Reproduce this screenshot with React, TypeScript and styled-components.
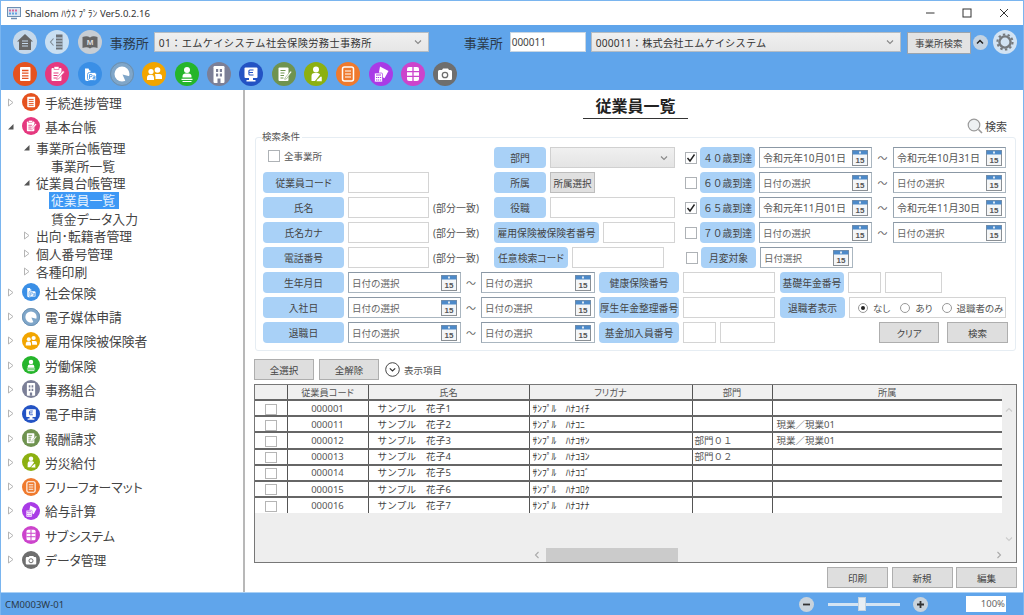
import React from "react";
import styled, { createGlobalStyle } from "styled-components";

const Global = createGlobalStyle`
  html, body { margin: 0; padding: 0; width: 1024px; height: 615px; overflow: hidden; background: #fff; }
  * { box-sizing: border-box; }
  body { font-family: "Noto Sans", "Noto Sans CJK JP", sans-serif; color: #444; }
`;

const Win = styled.div`
  width: 1024px; height: 615px; display: flex; flex-direction: column;
  border: 1px solid #7ab5ef; border-bottom: 0; background: #fff; overflow: hidden;
`;
const TitleBar = styled.div`
  height: 24px; flex: none; display: flex; align-items: center; padding-left: 6px; background: #fff;
`;
const TitleText = styled.span`
  margin-left: 4px; font-size: 9.6px; color: #333; white-space: nowrap; flex: 1;
`;
const WinControls = styled.div`
  display: flex; align-items: center; margin-right: 1px;
`;
const WinBtn = styled.div`
  width: 37px; height: 24px; display: flex; align-items: center; justify-content: center;
`;
const Toolbar = styled.div`
  height: 65px; flex: none; background: #60a5eb; padding: 5px 0 0 12px;
  display: flex; flex-direction: column; gap: 8px;
`;
const ToolRow = styled.div`
  height: 24px; display: flex; align-items: center;
`;
const IconRow = styled.div`
  height: 24px; display: flex; align-items: center; gap: 8.33px;
`;
const ToolLabel = styled.span<{ $ml: number }>`
  margin-left: ${(p) => p.$ml}px; font-size: 13px; color: #2b3a4a; white-space: nowrap; width: 40px;
`;
const ToolSelect = styled.div<{ $w: number; $ml: number; $ls: number }>`
  width: ${(p) => p.$w}px; margin-left: ${(p) => p.$ml}px; height: 20px; flex: none;
  display: flex; align-items: center; justify-content: space-between; padding: 0 6px 0 4px;
  background: linear-gradient(#f0f0f0, #e6e6e6); border: 1px solid #b4bcc4;
  font-size: 10.2px; letter-spacing: ${(p) => p.$ls}px; color: #333; white-space: nowrap;
`;
const ToolInput = styled.div<{ $w: number; $ml: number }>`
  width: ${(p) => p.$w}px; margin-left: ${(p) => p.$ml}px; height: 20px; flex: none;
  background: #fff; border: 1px solid #c9d6e2; padding-left: 1px; font-size: 10px; line-height: 18px; color: #444;
`;
const ToolBtn = styled.div`
  width: 64px; height: 22px; margin-left: 6px; margin-top: 2px; flex: none; background: #e3e3e3; border: 1px solid #9aa4ae;
  font-size: 9.5px; color: #444; display: flex; align-items: center; justify-content: center;
`;
const Collapse = styled.div`
  width: 15px; height: 15px; margin-left: 2px; border-radius: 50%; background: #c3d3e2;
  display: flex; align-items: center; justify-content: center; flex: none;
`;
const GearWrap = styled.div`
  margin-left: 5px; flex: none; display: flex;
`;
const Body = styled.div`
  flex: 1; min-height: 0; display: flex;
`;
const Sidebar = styled.nav`
  width: 242px; flex: none; background: #fff; font-feature-settings: "palt";
`;
const Splitter = styled.div`
  width: 2px; flex: none; background: #b8b8b8;
`;
const NavTop = styled.div`
  height: 24.3px; display: flex; align-items: center; padding-left: 6px; font-size: 12.8px; color: #444; white-space: nowrap;
`;
const NavSub = styled.div<{ $indent: number }>`
  height: 17.7px; display: flex; align-items: center; padding-left: ${(p) => p.$indent}px; font-size: 12.8px; color: #444; white-space: nowrap;
`;
const Arrow = styled.span<{ $w: number }>`
  width: ${(p) => p.$w}px; flex: none; display: flex; align-items: center;
`;
const NavIconBox = styled.span`
  width: 18px; height: 18px; margin: 0 5px 0 5px; flex: none; display: flex;
`;
const Selected = styled.span`
  background: #3d98f5; color: #e8f3ff; padding: 0 2px; margin-left: -2px; height: 17px; line-height: 17px; display: block; min-width: 70px;
`;
const Main = styled.main`
  flex: 1; min-width: 0; display: flex; flex-direction: column; padding: 0 6px 4px 9px;
`;
const TitleBlock = styled.div`
  height: 29px; flex: none; display: flex; justify-content: center;
`;
const PageTitle = styled.h1`
  margin: 0; width: 105px; height: 29px; border-bottom: 1px solid #333; text-align: center;
  font-size: 16px; line-height: 33px; font-weight: 700; color: #222; white-space: nowrap;
`;
const SearchToggle = styled.div`
  height: 16px; margin-top: -1px; flex: none; display: flex; align-items: center; justify-content: flex-end; gap: 1px;
  padding-right: 10px; font-size: 11px; color: #444;
`;
const Fieldset = styled.fieldset`
  height: 219px; flex: none; margin: -2px 1px 0 1px; padding: 0 0 0 7px; min-width: 0;
  border: 1px solid #e6edf3; border-radius: 3px;
`;
const Legend = styled.legend`
  margin-left: -1px; padding: 0 2px 0 0; font-size: 9.5px; line-height: 11px; color: #555; transform: translateY(-1px);
`;
const Rows = styled.div`
  display: flex; flex-direction: column; gap: 4px; margin-top: 4px;
`;
const Row = styled.div`
  height: 21px; display: flex; align-items: center;
`;
const Cell = styled.div<{ $w: number }>`
  width: ${(p) => p.$w}px; flex: none; height: 21px; display: flex; align-items: center; gap: 4px;
`;
const Label = styled.div<{ $w: number; $ml?: number; $full?: boolean }>`
  width: ${(p) => p.$w}px; height: 21px; flex: none; border-radius: 4px; background: #a9d1f7; margin-left: ${(p) => p.$ml ?? 0}px;
  font-size: 9.8px; color: #444; display: flex; align-items: center; justify-content: center; white-space: nowrap;
  font-feature-settings: ${(p) => (p.$full ? "normal" : '"palt"')};
`;
const TextBox = styled.div<{ $w: number }>`
  width: ${(p) => p.$w}px; height: 21px; flex: none; background: #fff; border: 1px solid #d4d4d4;
`;
const Note = styled.span`
  font-size: 10px; color: #555; white-space: nowrap;
`;
const SelectBox = styled.div<{ $w: number }>`
  width: ${(p) => p.$w}px; height: 21px; flex: none; background: linear-gradient(#f0f0f0, #e4e4e4); border: 1px solid #d0d0d0;
  display: flex; align-items: center; justify-content: flex-end; padding-right: 6px;
`;
const SmallButton = styled.div`
  width: 45px; height: 21px; flex: none; background: #e0e0e0; border: 1px solid #bdbdbd;
  font-size: 9.5px; color: #444; display: flex; align-items: center; justify-content: center; white-space: nowrap;
`;
const CheckBox = styled.span`
  width: 12px; height: 12px; flex: none; background: #fff; border: 1px solid #aeb2b6;
  display: flex; align-items: center; justify-content: center;
`;
const CheckLabel = styled.span`
  display: flex; align-items: center; gap: 4px; margin: -4px 0 0 5px; font-size: 9.5px; color: #555; white-space: nowrap;
`;
const DateBox = styled.div<{ $w: number; $set?: boolean }>`
  width: ${(p) => p.$w}px; height: 21px; flex: none; background: #fff; border: 1px solid #aab6c0; border-top-color: #8b98a5; border-left-color: #98a5b1;
  padding: 0 3px 0 3px; display: flex; align-items: center; justify-content: space-between;
  font-size: ${(p) => (p.$set ? "10px" : "9.5px")}; color: ${(p) => (p.$set ? "#555" : "#666")}; white-space: nowrap;
`;
const Tilde = styled.span<{ $w: number }>`
  width: ${(p) => p.$w}px; flex: none; text-align: center; font-size: 10px; color: #666; margin: 0 -4px;
`;
const RadioGroup = styled.div`
  width: 157px; height: 21px; flex: none; background: #fff; border: 1px solid #d4d4d4;
  display: flex; align-items: center; padding-left: 8px; font-size: 9.5px; color: #555; white-space: nowrap;
  font-feature-settings: "palt";
`;
const RadioItem = styled.span<{ $ml?: number }>`
  display: flex; align-items: center; gap: 5px; margin-left: ${(p) => p.$ml ?? 0}px;
`;
const RadioDot = styled.span<{ $on?: boolean }>`
  width: 10px; height: 10px; flex: none; border-radius: 50%; border: 1px solid #999; background: #fff;
  display: flex; align-items: center; justify-content: center;
  &::after { content: ""; width: 4px; height: 4px; border-radius: 50%; background: ${(p) => (p.$on ? "#222" : "transparent")}; }
`;
const GrayButton = styled.div<{ $w?: number; $ml?: number }>`
  width: ${(p) => p.$w ?? 61}px; height: 21px; flex: none; margin-left: ${(p) => p.$ml ?? 0}px;
  background: #dedede; border: 1px solid #aeaeae; font-size: 9.5px; color: #444;
  display: flex; align-items: center; justify-content: center; white-space: nowrap;
  font-feature-settings: "palt";
`;
const ActionRow = styled.div`
  height: 21px; margin-top: 8px; flex: none; display: flex; align-items: center; gap: 5px;
`;
const ShowItems = styled.span`
  display: flex; align-items: center; gap: 4px; margin-left: 1px; font-size: 9.5px; color: #555; white-space: nowrap;
`;
const TableFrame = styled.div`
  flex: 1; min-height: 0; margin-top: 4px; display: flex; flex-direction: column;
  background: #eeeeee; border: 1px solid #777;
`;
const TableArea = styled.div`
  flex: 1; min-height: 0; display: flex;
`;
const Table = styled.table`
  width: 747px; flex: none; height: min-content; table-layout: fixed; border-collapse: collapse;
  font-size: 9.5px; color: #555;
`;
const Th = styled.th<{ $w: number }>`
  width: ${(p) => p.$w}px; height: 15px; padding: 1px 0 0; font-weight: 400; background: #f0f0f0; color: #555; font-size: 9.2px;
  border-right: 1px solid #555; border-bottom: 2px solid #666; text-align: center; line-height: 12px;
  font-feature-settings: "palt";
  &:last-child { border-right: 0; }
`;
const Td = styled.td<{ $center?: boolean; $pl?: number }>`
  height: 16.2px; padding: 1px 0 0 ${(p) => p.$pl ?? 0}px; background: #fff;
  border-right: 1px solid #555; border-bottom: 2px solid #666; line-height: 12px; white-space: nowrap; overflow: hidden;
  text-align: ${(p) => (p.$center ? "center" : "left")};
  font-size: 9.5px; color: #555;
  &:last-child { border-right: 0; }
  tr:last-child & { border-bottom: 0; }
`;
const NameText = styled.span`
  color: #444; letter-spacing: 0.25px;
`;
const KanaText = styled.span`
  color: #333;
`;
const RowCheck = styled.span`
  display: inline-block; width: 12px; height: 11px; border: 1px solid #b5b5b5; background: #fff; vertical-align: middle;
`;
const VScroll = styled.div`
  flex: 1; display: flex; flex-direction: column; justify-content: space-between; align-items: center; padding: 21px 0 4px;
`;
const HScroll = styled.div`
  height: 15px; flex: none; display: flex; align-items: center; padding-left: 278px;
`;
const HThumb = styled.div`
  width: 132px; height: 14px; margin-left: 5px; background: #cbcbcb;
`;
const HEnd = styled.span`
  margin-left: 317px; display: flex;
`;
const BottomBar = styled.div`
  height: 21px; margin-top: 4px; flex: none; display: flex; justify-content: flex-end; gap: 3.5px;
`;
const StatusBar = styled.footer`
  height: 23px; flex: none; background: #60a5eb; display: flex; align-items: center; padding-left: 4px; margin: 0 -1px;
  font-size: 9.5px; color: #2b3a4a; border-top: 1px solid #a9d0f5;
`;
const StatusCode = styled.span`
  flex: 1; padding-left: 1px;
`;
const ZoomRound = styled.span`
  width: 15px; height: 15px; border-radius: 50%; background: #c9d3dc; flex: none; display: flex; align-items: center; justify-content: center;
`;
const Slider = styled.div`
  width: 72px; height: 3px; margin: 0 13px 0 14px; background: #d4e4f3; position: relative; flex: none;
`;
const SliderThumb = styled.span`
  position: absolute; left: 30px; top: -6px; width: 8px; height: 14px; background: #e8eef3; border: 1px solid #c5d3df;
`;
const ZoomValue = styled.div`
  width: 40px; height: 16px; margin: 0 18px 0 38px; flex: none; background: #fff; text-align: right; padding-right: 1px;
  font-size: 9.5px; line-height: 16px; color: #666;
`;

const Svg = styled.svg`
  display: block; flex: none;
`;

const Chevron = ({ dir = "down", color = "#888", weight = 1.1 }: { dir?: "down" | "up" | "left" | "right"; color?: string; weight?: number }) => {
  const d = { down: "M1 2.5 4 5.5 7 2.5", up: "M1 5.5 4 2.5 7 5.5", left: "M5.5 1 2.5 4 5.5 7", right: "M2.5 1 5.5 4 2.5 7" }[dir];
  return (
    <Svg width="8" height="8" viewBox="0 0 8 8">
      <path d={d} fill="none" stroke={color} strokeWidth={weight} />
    </Svg>
  );
};

const Calendar = () => (
  <Svg width="16" height="16" viewBox="0 0 16 16">
    <rect x="0.5" y="0.5" width="15" height="15" fill="#f4f6f8" stroke="#8a8f94" />
    <rect x="0.5" y="0.5" width="15" height="4" fill="#4d8ac9" />
    <rect x="7" y="1.5" width="2" height="2" fill="#dfe9f3" />
    <text x="8" y="13.2" textAnchor="middle" fontSize="8" fontWeight="700" fontFamily="Liberation Sans, sans-serif" fill="#555">15</text>
  </Svg>
);

const Check = () => (
  <Svg width="10" height="10" viewBox="0 0 10 10">
    <path d="M1.5 5 4 8 8.5 1.5" fill="none" stroke="#222" strokeWidth="1.4" />
  </Svg>
);

const colors = ["#e5521f", "#e5387f", "#3a8fe6", "#6f9bc4", "#f2a500", "#25b52b", "#7b7f97", "#2353c4", "#6f9350", "#8cb011", "#ef7a2e", "#a93be6", "#cc44cc", "#6e6e6e"];

const glyph = (i: number, c: string) => {
  const W = "#fff";
  switch (i) {
    case 0:
      return (
        <>
          <rect x="7" y="5" width="10.5" height="14" rx="1" fill={W} />
          <path d="M9 8.5h6.5M9 11.2h6.5M9 13.9h6.5M9 16.4h6.5" stroke={c} strokeWidth="1.3" />
        </>
      );
    case 1:
      return (
        <>
          <rect x="6.5" y="6" width="10" height="13" rx="1" fill={W} />
          <rect x="9" y="4.5" width="5" height="3" fill={W} stroke={c} strokeWidth=".6" />
          <path d="M8.5 11h5M8.5 13.5h4M8.5 16h3" stroke={c} strokeWidth="1.1" />
          <path d="M12 15.5 18 8.5l1.6 1.4-6 7-2 .4z" fill={W} stroke={c} strokeWidth=".6" />
        </>
      );
    case 2:
      return (
        <>
          <path d="M7 8.5V6.5h3.5l1 2h1V17a2 2 0 0 1-2 2H9a2 2 0 0 1-2-2z" fill={W} />
          <rect x="9.5" y="10.5" width="9" height="8" rx="2" fill={W} stroke={c} strokeWidth=".8" />
          <path d="M11.5 17v-4.5h1.6a1.1 1.1 0 0 1 0 2.2h-1.6M15 14h2v3h-2v-1.4h2" fill="none" stroke={c} strokeWidth=".8" />
        </>
      );
    case 3:
      return (
        <>
          <circle cx="12" cy="12" r="11.5" fill="#7fa6c9" stroke="#6a8fb0" />
          <circle cx="12" cy="12" r="7.5" fill={W} />
          <path d="M12.5 12.5 20.5 14.5 16 20.5z" fill="#7fa6c9" />
        </>
      );
    case 4:
      return (
        <>
          <circle cx="9" cy="9.5" r="2.6" fill={W} />
          <circle cx="15.5" cy="8" r="2.8" fill={W} />
          <path d="M5 18v-2.5A3 3 0 0 1 8 12.8h2a3 3 0 0 1 2 2.7V18z" fill={W} />
          <path d="M13 12h4.5a2.5 2.5 0 0 1 2.5 2.5V17h-6.5v-2z" fill={W} />
        </>
      );
    case 5:
      return (
        <>
          <circle cx="12" cy="8" r="3" fill={W} />
          <path d="M7.5 15.5v-1.2a3 3 0 0 1 3-2.8h3a3 3 0 0 1 3 2.8v1.2z" fill={W} />
          <path d="M6.5 17.3h11M7.5 19.5h9" stroke={W} strokeWidth="1.2" />
        </>
      );
    case 6:
      return (
        <>
          <rect x="6.5" y="4" width="11" height="17" rx="1.2" fill={W} />
          <path d="M9 7h2.2v3H9zM12.8 7H15v3h-2.2zM9 11.5h2.2v3H9zM12.8 11.5H15v3h-2.2zM10.5 16.5h3V21h-3z" fill={c} />
        </>
      );
    case 7:
      return (
        <>
          <rect x="5.5" y="5.5" width="13" height="10.5" rx="1" fill={W} />
          <path d="M10 16h4v2h2.5v1.5h-9V18H10z" fill={W} />
          <path d="M14.5 8h-3.6a1 1 0 0 0-1 1v3a1 1 0 0 0 1 1h3.6M10 10.5h4" fill="none" stroke={c} strokeWidth="1.1" />
        </>
      );
    case 8:
      return (
        <>
          <rect x="6.5" y="5.5" width="10" height="13.5" rx="1" fill={W} />
          <path d="M8.5 8.5h5M8.5 11h4M8.5 13.5h3.5M8.5 16h3" stroke={c} strokeWidth="1.1" />
          <path d="M13 16 18.5 9l1.3 1-5.5 7-1.6.4z" fill={W} stroke={c} strokeWidth=".5" />
        </>
      );
    case 9:
      return (
        <>
          <circle cx="12" cy="7.5" r="3" fill={W} />
          <path d="M7.5 19v-5a3 3 0 0 1 3-3h3a3 3 0 0 1 2.6 1.5L11 19z" fill={W} />
          <path d="M12.5 19.5h5.5v-5h-1.5l-4 3.5z" fill={W} stroke={c} strokeWidth=".5" />
        </>
      );
    case 10:
      return (
        <>
          <rect x="6.5" y="5" width="11" height="14" rx="2" fill="none" stroke={W} strokeWidth="1.5" />
          <path d="M9 9h6M9 12h6M9 15h6" stroke={W} strokeWidth="1.2" />
        </>
      );
    case 11:
      return (
        <>
          <path d="M11 4.5 19.5 9l-4 7.2-6-3.2z" fill={W} />
          <rect x="5.5" y="11" width="8" height="9" rx="1" fill={W} stroke={c} strokeWidth=".7" />
          <path d="M7 13h5M7 15.5h1.4M9 15.5h1.2M11 15.5h1.2M7 18h1.4M9 18h1.2M11 18h1.2" stroke={c} strokeWidth="1" />
        </>
      );
    case 12:
      return (
        <>
          <rect x="6" y="5" width="12" height="14" rx="2" fill={W} />
          <path d="M12 5v14M6 9.7h12M6 14.3h12" stroke={c} strokeWidth="1.3" />
        </>
      );
    default:
      return (
        <>
          <path d="M5 9.500a1.500 1.500 0 0 1 1.500-1.500H9l1-1.500h5l1 1.500h1.500A1.500 1.500 0 0 1 19 9.500v7a1.500 1.500 0 0 1-1.500 1.500h-11A1.500 1.500 0 0 1 5 16.500z" fill={W} />
          <circle cx="12" cy="13" r="2.700" fill="none" stroke={c} strokeWidth="1.300" />
        </>
      );
  }
};

const AppIcon = ({ i, size }: { i: number; size: number }) => {
  const c = colors[i];
  return (
    <Svg width={size} height={size} viewBox="0 0 24 24">
      <circle cx="12" cy="12" r="12" fill={c} />
      {glyph(i, c)}
    </Svg>
  );
};

const HomeIcon = () => (
  <Svg width="24" height="24" viewBox="0 0 24 24">
    <circle cx="12" cy="12" r="12" fill="#c5d8ea" />
    <path d="M12 4 20 11.500h-2V20H6v-8.500H4z" fill="#666" />
    <path d="M9 11h6M9 13.500h6M9 16h6" stroke="#c5d8ea" strokeWidth="1.100" />
  </Svg>
);
const BackIcon = () => (
  <Svg width="24" height="24" viewBox="0 0 24 24">
    <circle cx="12" cy="12" r="12" fill="#c9dff2" />
    <rect x="11" y="4.500" width="6.500" height="15" fill="#6c7278" />
    <path d="M11 8h6.500M11 11h6.500M11 14h6.500M11 17h6.500" stroke="#c9dff2" strokeWidth="1" />
    <path d="M8.500 8.500 5.500 12l3 3.500" fill="none" stroke="#7f8a94" strokeWidth="1.100" />
  </Svg>
);
const BookIcon = () => (
  <Svg width="24" height="24" viewBox="0 0 24 24">
    <circle cx="12" cy="12" r="12" fill="#c8ced4" />
    <path d="M4.500 7c3-1 5.500-1 7.500.5 2-1.500 4.500-1.500 7.500-.5v11c-3-1-5.500-1-7.500.5-2-1.500-4.500-1.500-7.500-.5z" fill="#666" />
    <text x="12" y="15" textAnchor="middle" fontSize="8" fontWeight="700" fontFamily="Liberation Sans, sans-serif" fill="#ddd">M</text>
  </Svg>
);
const GearIcon = () => (
  <Svg width="24" height="24" viewBox="0 0 24 24">
    <circle cx="12" cy="12" r="12" fill="#d2e3f3" />
    <circle cx="12" cy="12" r="5.600" fill="none" stroke="#75797d" strokeWidth="2.400" />
    <circle cx="12" cy="12" r="7.600" fill="none" stroke="#75797d" strokeWidth="2" strokeDasharray="2.400 2.377" />
  </Svg>
);
const Lens = () => (
  <Svg width="18" height="16" viewBox="0 0 18 16">
    <circle cx="8" cy="7" r="5.800" fill="#eef1f3" stroke="#9a9a9a" strokeWidth="1.200" />
    <path d="M12.500 11.500 16 15" stroke="#9a9a9a" strokeWidth="1.600" />
  </Svg>
);
const Tri = ({ open }: { open?: boolean }) =>
  open ? (
    <Svg width="7" height="7" viewBox="0 0 7 7">
      <path d="M6.500 1v5.500H1z" fill="#555" />
    </Svg>
  ) : (
    <Svg width="7" height="9" viewBox="0 0 7 9">
      <path d="M1.500 1 6 4.500 1.500 8z" fill="#fff" stroke="#b5b5b5" />
    </Svg>
  );

const TOP2 = ["社会保険", "電子媒体申請", "雇用保険被保険者", "労働保険", "事務組合", "電子申請", "報酬請求", "労災給付", "フリーフォーマット", "給与計算", "サブシステム", "データ管理"];

const NavItem = ({ i, text, open }: { i: number; text: string; open?: boolean }) => (
  <NavTop>
    <Arrow $w={10}>
      <Tri open={open} />
    </Arrow>
    <NavIconBox>
      <AppIcon i={i} size={18} />
    </NavIconBox>
    {text}
  </NavTop>
);
const NavGroup = ({ text, open }: { text: string; open?: boolean }) => (
  <NavSub $indent={22}>
    <Arrow $w={13}>
      <Tri open={open} />
    </Arrow>
    {text}
  </NavSub>
);

const DateField = ({ w, text, set }: { w: number; text: string; set?: boolean }) => (
  <DateBox $w={w} $set={set}>
    <span>{text}</span>
    <Calendar />
  </DateBox>
);

const AgeRow = ({ label, from, to, checked }: { label: string; from: string; to: string; checked?: boolean }) => (
  <Cell $w={323}>
    <CheckBox>{checked && <Check />}</CheckBox>
    <Label $w={55} $ml={-1} $full>{label}</Label>
    <DateField w={113} text={from} set={checked} />
    <Tilde $w={21}>～</Tilde>
    <DateField w={113} text={to} set={checked} />
  </Cell>
);

const DateRange = () => (
  <>
    <DateField w={113} text="日付の選択" />
    <Tilde $w={20}>～</Tilde>
    <DateField w={114} text="日付の選択" />
  </>
);

const people = [
  ["000001", "サンプル　花子1", "ｻﾝﾌﾟﾙ　ﾊﾅｺｲﾁ", "", ""],
  ["000011", "サンプル　花子2", "ｻﾝﾌﾟﾙ　ﾊﾅｺﾆ", "", "現業／現業01"],
  ["000012", "サンプル　花子3", "ｻﾝﾌﾟﾙ　ﾊﾅｺｻﾝ", "部門０１", "現業／現業01"],
  ["000013", "サンプル　花子4", "ｻﾝﾌﾟﾙ　ﾊﾅｺﾖﾝ", "部門０２", ""],
  ["000014", "サンプル　花子5", "ｻﾝﾌﾟﾙ　ﾊﾅｺｺﾞ", "", ""],
  ["000015", "サンプル　花子6", "ｻﾝﾌﾟﾙ　ﾊﾅｺﾛｸ", "", ""],
  ["000016", "サンプル　花子7", "ｻﾝﾌﾟﾙ　ﾊﾅｺﾅﾅ", "", ""],
];

export default function App() {
  return (
    <>
      <Global />
      <Win>
        <TitleBar>
          <Svg width="14" height="13" viewBox="0 0 14 13">
            <rect x="0.500" y="0.500" width="13" height="9" fill="#dbe6f2" stroke="#6d8fb3" />
            <path d="M2 2.500h2v2H2zM5 2.500h2v2H5zM8 2.500h2v2H8z" fill="#d56a9c" />
            <path d="M2 5.500h2v2H2zM5 5.500h2v2H5zM8 5.500h2v2H8z" fill="#62a3e0" />
            <path d="M4 11.500h6" stroke="#6d8fb3" strokeWidth="1.500" />
          </Svg>
          <TitleText>Shalom ﾊｳｽ ﾌﾟﾗﾝ Ver5.0.2.16</TitleText>
          <WinControls>
            <WinBtn>
              <Svg width="10" height="10" viewBox="0 0 10 10"><path d="M1 5h8.500" stroke="#333" /></Svg>
            </WinBtn>
            <WinBtn>
              <Svg width="10" height="10" viewBox="0 0 10 10"><rect x="1" y="1" width="8" height="8" fill="none" stroke="#333" /></Svg>
            </WinBtn>
            <WinBtn>
              <Svg width="10" height="10" viewBox="0 0 10 10"><path d="M1 1l8 8M9 1l-8 8" stroke="#333" /></Svg>
            </WinBtn>
          </WinControls>
        </TitleBar>
        <Toolbar>
          <ToolRow>
            <IconRow>
              <HomeIcon />
              <BackIcon />
              <BookIcon />
            </IconRow>
            <ToolLabel $ml={8}>事務所</ToolLabel>
            <ToolSelect $w={275} $ml={4} $ls={0.4}>
              <span>01：エムケイシステム社会保険労務士事務所</span>
              <Chevron />
            </ToolSelect>
            <ToolLabel $ml={35}>事業所</ToolLabel>
            <ToolInput $w={76} $ml={6}>000011</ToolInput>
            <ToolSelect $w={310} $ml={5} $ls={0.2}>
              <span>000011：株式会社エムケイシステム</span>
              <Chevron />
            </ToolSelect>
            <ToolBtn>事業所検索</ToolBtn>
            <Collapse>
              <Chevron dir="up" color="#222" weight={1.5} />
            </Collapse>
            <GearWrap>
              <GearIcon />
            </GearWrap>
          </ToolRow>
          <IconRow>
            {colors.map((_, i) => (
              <AppIcon key={i} i={i} size={24} />
            ))}
          </IconRow>
        </Toolbar>
        <Body>
          <Sidebar>
            <NavItem i={0} text="手続進捗管理" />
            <NavItem i={1} text="基本台帳" open />
            <NavGroup text="事業所台帳管理" open />
            <NavSub $indent={50}>事業所一覧</NavSub>
            <NavGroup text="従業員台帳管理" open />
            <NavSub $indent={50}>
              <Selected>従業員一覧</Selected>
            </NavSub>
            <NavSub $indent={50}>賃金データ入力</NavSub>
            <NavGroup text="出向･転籍者管理" />
            <NavGroup text="個人番号管理" />
            <NavGroup text="各種印刷" />
            {TOP2.map((t, k) => (
              <NavItem key={t} i={k + 2} text={t} />
            ))}
          </Sidebar>
          <Splitter />
          <Main>
            <TitleBlock>
              <PageTitle>従業員一覧</PageTitle>
            </TitleBlock>
            <SearchToggle>
              <Lens />
              検索
            </SearchToggle>
            <Fieldset>
              <Legend>検索条件</Legend>
              <Rows>
                <Row>
                  <Cell $w={231}>
                    <CheckLabel>
                      <CheckBox />
                      全事業所
                    </CheckLabel>
                  </Cell>
                  <Cell $w={191}>
                    <Label $w={52}>部門</Label>
                    <SelectBox $w={125}>
                      <Chevron />
                    </SelectBox>
                  </Cell>
                  <AgeRow label="４０歳到達" from="令和元年10月01日" to="令和元年10月31日" checked />
                </Row>
                <Row>
                  <Cell $w={231}>
                    <Label $w={81}>従業員コード</Label>
                    <TextBox $w={81} />
                  </Cell>
                  <Cell $w={191}>
                    <Label $w={52}>所属</Label>
                    <SmallButton>所属選択</SmallButton>
                  </Cell>
                  <AgeRow label="６０歳到達" from="日付の選択" to="日付の選択" />
                </Row>
                <Row>
                  <Cell $w={231}>
                    <Label $w={81}>氏名</Label>
                    <TextBox $w={81} />
                    <Note>(部分一致)</Note>
                  </Cell>
                  <Cell $w={191}>
                    <Label $w={52}>役職</Label>
                    <TextBox $w={125} />
                  </Cell>
                  <AgeRow label="６５歳到達" from="令和元年11月01日" to="令和元年11月30日" checked />
                </Row>
                <Row>
                  <Cell $w={231}>
                    <Label $w={81}>氏名カナ</Label>
                    <TextBox $w={81} />
                    <Note>(部分一致)</Note>
                  </Cell>
                  <Cell $w={191}>
                    <Label $w={105}>雇用保険被保険者番号</Label>
                    <TextBox $w={72} />
                  </Cell>
                  <AgeRow label="７０歳到達" from="日付の選択" to="日付の選択" />
                </Row>
                <Row>
                  <Cell $w={231}>
                    <Label $w={81}>電話番号</Label>
                    <TextBox $w={81} />
                    <Note>(部分一致)</Note>
                  </Cell>
                  <Cell $w={192}>
                    <Label $w={74}>任意検索コード</Label>
                    <TextBox $w={92} />
                  </Cell>
                  <Cell $w={322}>
                    <CheckBox />
                    <Label $w={55} $ml={-1}>月変対象</Label>
                    <DateField w={93} text="日付選択" />
                  </Cell>
                </Row>
                <Row>
                  <Cell $w={336}>
                    <Label $w={81}>生年月日</Label>
                    <DateRange />
                  </Cell>
                  <Cell $w={181}>
                    <Label $w={80}>健康保険番号</Label>
                    <TextBox $w={92} />
                  </Cell>
                  <Cell $w={228}>
                    <Label $w={64}>基礎年金番号</Label>
                    <TextBox $w={33} />
                    <TextBox $w={57} />
                  </Cell>
                </Row>
                <Row>
                  <Cell $w={336}>
                    <Label $w={81}>入社日</Label>
                    <DateRange />
                  </Cell>
                  <Cell $w={181}>
                    <Label $w={80}>厚生年金整理番号</Label>
                    <TextBox $w={92} />
                  </Cell>
                  <Cell $w={228}>
                    <Label $w={65}>退職者表示</Label>
                    <RadioGroup>
                      <RadioItem><RadioDot $on />なし</RadioItem>
                      <RadioItem $ml={10}><RadioDot />あり</RadioItem>
                      <RadioItem $ml={9}><RadioDot />退職者のみ</RadioItem>
                    </RadioGroup>
                  </Cell>
                </Row>
                <Row>
                  <Cell $w={336}>
                    <Label $w={81}>退職日</Label>
                    <DateRange />
                  </Cell>
                  <Cell $w={181}>
                    <Label $w={80}>基金加入員番号</Label>
                    <TextBox $w={33} />
                    <TextBox $w={55} />
                  </Cell>
                  <Cell $w={228}>
                    <GrayButton $ml={99} $w={60}>クリア</GrayButton>
                    <GrayButton $ml={4}>検索</GrayButton>
                  </Cell>
                </Row>
              </Rows>
            </Fieldset>
            <ActionRow>
              <GrayButton $w={60}>全選択</GrayButton>
              <GrayButton $w={60}>全解除</GrayButton>
              <ShowItems>
                <Svg width="15" height="15" viewBox="0 0 15 15">
                  <circle cx="7.500" cy="7.500" r="6.800" fill="#fff" stroke="#444" />
                  <path d="M4.800 6.300 7.500 9l2.700-2.700" fill="none" stroke="#333" strokeWidth="1.200" />
                </Svg>
                表示項目
              </ShowItems>
            </ActionRow>
            <TableFrame>
              <TableArea>
                <Table>
                  <thead>
                    <tr>
                      <Th $w={32} />
                      <Th $w={81}>従業員コード</Th>
                      <Th $w={161}>氏名</Th>
                      <Th $w={163}>フリガナ</Th>
                      <Th $w={80}>部門</Th>
                      <Th $w={230}>所属</Th>
                    </tr>
                  </thead>
                  <tbody>
                    {people.map((p) => (
                      <tr key={p[0]}>
                        <Td $center><RowCheck /></Td>
                        <Td $center>{p[0]}</Td>
                        <Td $pl={9}><NameText>{p[1]}</NameText></Td>
                        <Td $pl={3}><KanaText>{p[2]}</KanaText></Td>
                        <Td $pl={2}>{p[3]}</Td>
                        <Td $pl={4}>{p[4]}</Td>
                      </tr>
                    ))}
                  </tbody>
                </Table>
                <VScroll>
                  <Chevron dir="up" color="#ccc" />
                  <Chevron dir="down" color="#ccc" />
                </VScroll>
              </TableArea>
              <HScroll>
                <Chevron dir="left" color="#aaa" />
                <HThumb />
                <HEnd>
                  <Chevron dir="right" color="#aaa" />
                </HEnd>
              </HScroll>
            </TableFrame>
            <BottomBar>
              <GrayButton>印刷</GrayButton>
              <GrayButton>新規</GrayButton>
              <GrayButton>編集</GrayButton>
            </BottomBar>
          </Main>
        </Body>
        <StatusBar>
          <StatusCode>CM0003W-01</StatusCode>
          <ZoomRound>
            <Svg width="9" height="9" viewBox="0 0 9 9"><path d="M1 4.500h7" stroke="#333" strokeWidth="1.800" /></Svg>
          </ZoomRound>
          <Slider>
            <SliderThumb />
          </Slider>
          <ZoomRound>
            <Svg width="9" height="9" viewBox="0 0 9 9"><path d="M1 4.500h7M4.500 1v7" stroke="#333" strokeWidth="1.800" /></Svg>
          </ZoomRound>
          <ZoomValue>100%</ZoomValue>
        </StatusBar>
      </Win>
    </>
  );
}
